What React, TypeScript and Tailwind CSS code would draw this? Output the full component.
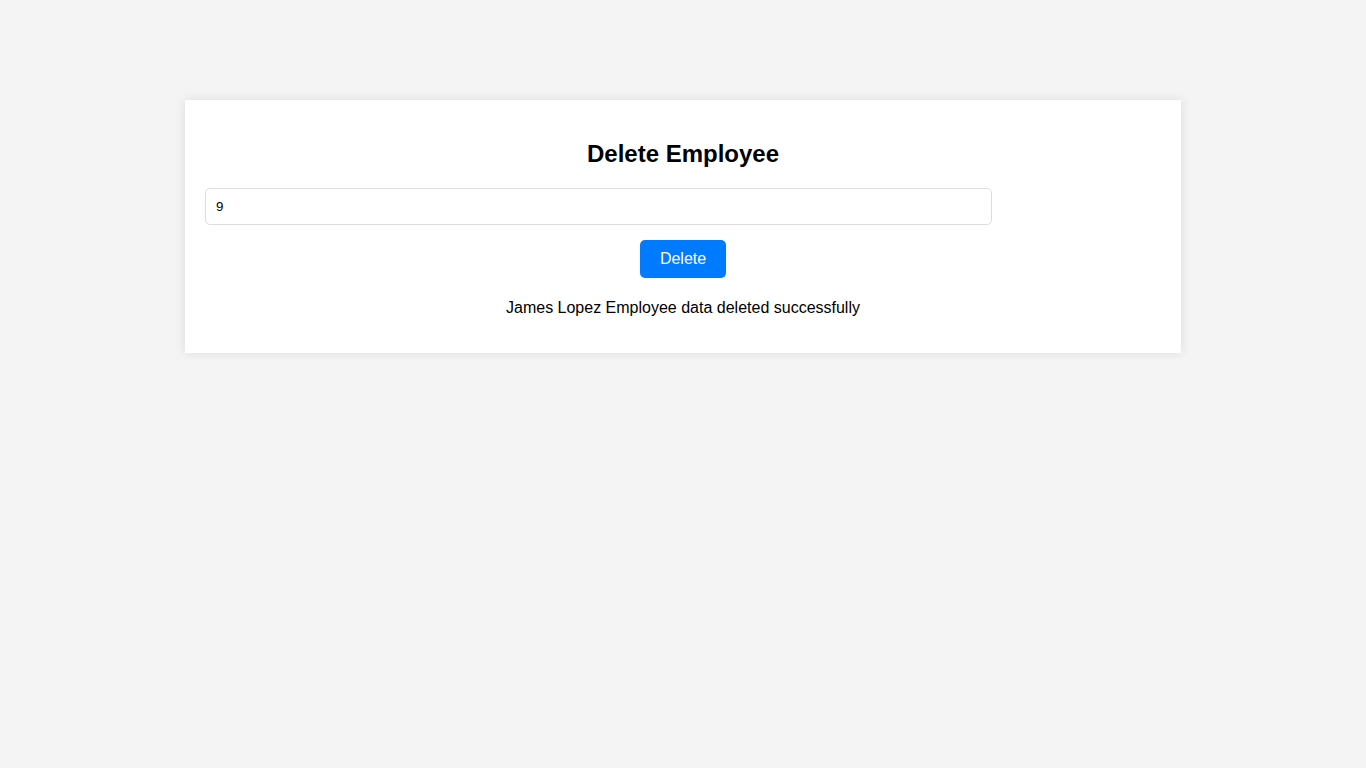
export default function App() {
  return (
    <div className="min-h-screen bg-[#f4f4f4] pt-[100px] font-['Liberation_Sans',Arial,sans-serif] text-black">
      <div className="mx-auto w-[996px] bg-white p-5 text-center shadow-[0_0_10px_rgba(0,0,0,0.1)]">
        <h2 className="my-5 text-2xl leading-[28px] font-bold">Delete Employee</h2>
        <div className="text-left">
          <input
            type="text"
            defaultValue="9"
            className="box-content h-[15px] w-[80%] rounded-[5px] border border-[#dddddd] p-[10px] text-[13.33px] leading-[15px] outline-none"
          />
        </div>
        <button className="mt-[15px] rounded-[5px] bg-[#007bff] px-5 py-[10px] text-base leading-[18px] text-white">
          Delete
        </button>
        <p className="mt-[21px] mb-4 text-base leading-[18px]">
          James Lopez Employee data deleted successfully
        </p>
      </div>
    </div>
  );
}
